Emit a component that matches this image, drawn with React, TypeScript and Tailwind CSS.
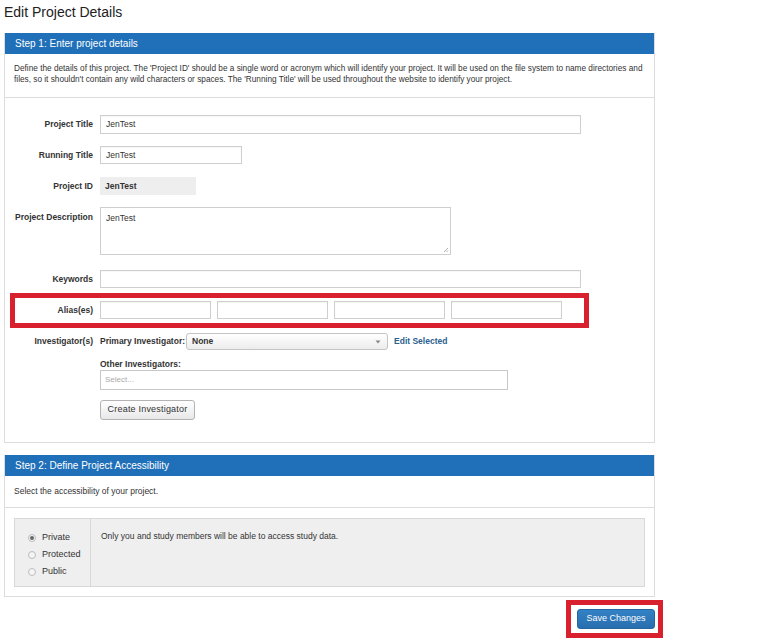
import React from "react";

const font = { fontFamily: '"Liberation Sans", Arial, sans-serif' };

const Label = ({ children, top }: { children: React.ReactNode; top?: boolean }) => (
  <div
    className={`w-[88px] shrink-0 text-right text-[8.5px] font-bold text-[#333] ${top ? "self-start pt-[4px]" : ""}`}
  >
    {children}
  </div>
);

const TextInput = ({ value, className }: { value?: string; className: string }) => (
  <div
    className={`flex items-center border border-[#cfcfcf] bg-white px-[5px] text-[8.5px] text-[#333] shadow-[inset_0_1px_1px_rgba(0,0,0,0.04)] ${className}`}
  >
    {value}
  </div>
);

const Radio = ({ checked, label }: { checked?: boolean; label: string }) => (
  <div className="flex h-[17px] items-center gap-[6px]">
    <span className="flex h-[8px] w-[8px] items-center justify-center rounded-full border border-[#bdbdbd] bg-[#f4f4f4]">
      {checked && <span className="h-[4px] w-[4px] rounded-full bg-[#666]" />}
    </span>
    <span className="text-[9px] text-[#333]">{label}</span>
  </div>
);

export default function App() {
  return (
    <div className="min-h-[638px] w-[782px] bg-white pl-[4px]" style={font}>
      <h1 className="pt-[4px] text-[14px] leading-[17px] text-[#222]">Edit Project Details</h1>

      {/* Step 1 */}
      <div className="mt-[12px] w-[651px] border border-t-0 border-[#dcdcdc]">
        <div className="flex h-[21px] items-center bg-[#1f70b8] pl-[10px] text-[10px] text-white">
          Step 1: Enter project details
        </div>
        <p className="border-b border-[#dcdcdc] pb-[12px] pl-[9px] pr-[5px] pt-[10px] text-[8.25px] leading-[10.5px] text-[#333]">
          Define the details of this project. The 'Project ID' should be a single word or acronym which will identify your project. It will be used on the file system to name directories and files, so it shouldn't contain any wild characters or spaces. The 'Running Title' will be used throughout the website to identify your project.
        </p>

        <div className="flex flex-col pb-[22px] pt-[17px]">
          <div className="flex h-[19px] items-center gap-[7px]">
            <Label>Project Title</Label>
            <TextInput value="JenTest" className="h-[19px] w-[481px]" />
          </div>
          <div className="mt-[12px] flex h-[18px] items-center gap-[7px]">
            <Label>Running Title</Label>
            <TextInput value="JenTest" className="h-[18px] w-[142px]" />
          </div>
          <div className="mt-[13px] flex h-[18px] items-center gap-[7px]">
            <Label>Project ID</Label>
            <div className="flex h-[18px] w-[96px] items-center bg-[#eeeeee] px-[5px] text-[8.5px] font-bold text-[#333]">
              JenTest
            </div>
          </div>
          <div className="mt-[12px] flex gap-[7px]">
            <Label top>Project Description</Label>
            <div className="relative h-[48px] w-[351px] border border-[#cfcfcf] bg-white px-[5px] pt-[4px] text-[8.5px] text-[#333]">
              JenTest
              <svg className="absolute bottom-[1px] right-[1px]" width="6" height="6" viewBox="0 0 6 6">
                <path d="M5 1L1 5M5 3.5L3.5 5" stroke="#999" strokeWidth="0.8" />
              </svg>
            </div>
          </div>
          <div className="mt-[15px] flex h-[18px] items-center gap-[7px]">
            <Label>Keywords</Label>
            <TextInput className="h-[18px] w-[481px]" />
          </div>
          <div className="relative mt-[13px] flex h-[18px] items-center gap-[7px]">
            <div className="absolute left-[5px] top-[-8px] h-[35px] w-[579px] border-[5px] border-[#d8202e]" />
            <Label>Alias(es)</Label>
            <div className="flex gap-[6px]">
              <TextInput className="h-[18px] w-[111px]" />
              <TextInput className="h-[18px] w-[111px]" />
              <TextInput className="h-[18px] w-[111px]" />
              <TextInput className="h-[18px] w-[111px]" />
            </div>
          </div>
          <div className="mt-[14px] flex h-[17px] items-center gap-[7px]">
            <Label>Investigator(s)</Label>
            <span className="text-[8.5px] font-bold text-[#333]">Primary Investigator:</span>
            <div className="ml-[-6px] flex h-[17px] w-[202px] items-center justify-between rounded-[3px] border border-[#c4c4c4] bg-gradient-to-b from-white to-[#ececec] pl-[5px] pr-[6px] text-[8.5px] font-bold text-[#333]">
              None
              <svg width="6" height="4" viewBox="0 0 6 4">
                <path d="M0.5 0.5h5L3 3.5z" fill="#888" />
              </svg>
            </div>
            <span className="ml-[-1px] text-[8.5px] font-bold text-[#2b5f8f]">Edit Selected</span>
          </div>
          <div className="ml-[95px] mt-[9px] text-[8.5px] font-bold leading-[11px] text-[#333]">Other Investigators:</div>
          <div className="ml-[95px] flex h-[20px] w-[408px] items-center border border-[#c8c8c8] bg-white px-[4px] text-[8px] text-[#aaa]">
            Select...
          </div>
          <div className="ml-[95px] mt-[10px] flex h-[20px] w-[95px] items-center justify-center rounded-[3px] border border-[#b3b3b3] bg-gradient-to-b from-white to-[#e8e8e8] text-[9px] tracking-[0.2px] text-[#333]">
            Create Investigator
          </div>
        </div>
      </div>

      {/* Step 2 */}
      <div className="mt-[12px] w-[651px] border border-t-0 border-[#dcdcdc]">
        <div className="flex h-[21px] items-center bg-[#1f70b8] pl-[10px] text-[10px] text-white">
          Step 2: Define Project Accessibility
        </div>
        <div className="flex h-[32px] items-center border-b border-[#dcdcdc] px-[9px] text-[8.5px] text-[#333]">
          Select the accessibility of your project.
        </div>
        <div className="px-[9px] pb-[9px] pt-[10px]">
          <div className="flex h-[69px] border border-[#d8d8d8] bg-[#efefef]">
            <div className="flex w-[76px] flex-col border-r border-[#d8d8d8] pl-[13px] pt-[10px]">
              <Radio checked label="Private" />
              <Radio label="Protected" />
              <Radio label="Public" />
            </div>
            <div className="pl-[10px] pt-[11px] text-[8.5px] text-[#333]">
              Only you and study members will be able to access study data.
            </div>
          </div>
        </div>
      </div>

      <div className="flex w-[651px] justify-end pt-[12px]">
        <div className="relative">
          <div className="absolute left-[-11px] top-[-9px] h-[38px] w-[97px] border-[5px] border-[#d8202e]" />
          <div className="relative flex h-[20px] w-[78px] items-center justify-center rounded-[3px] border border-[#2765a0] bg-gradient-to-b from-[#3382c6] to-[#286eae] text-[9px] text-white">
            Save Changes
          </div>
        </div>
      </div>
    </div>
  );
}
